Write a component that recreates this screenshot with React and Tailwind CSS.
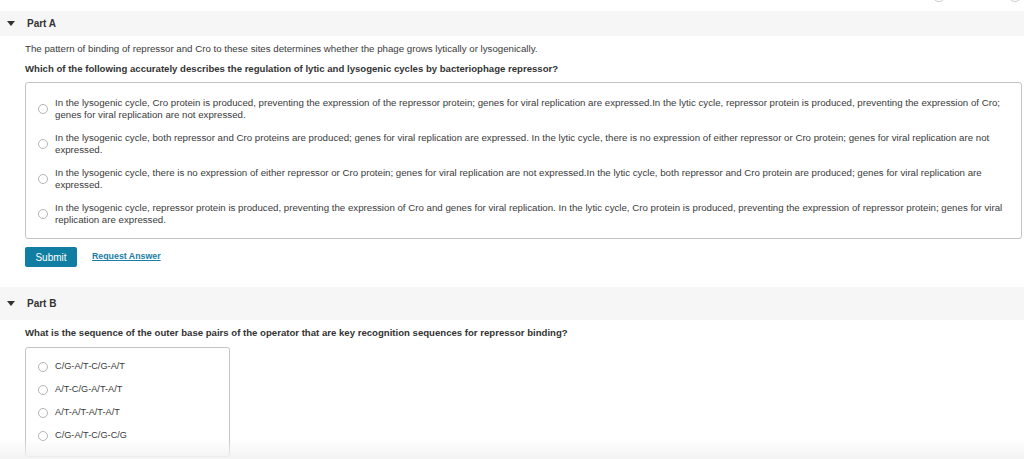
const optionsA = [
  [
    'In the lysogenic cycle, Cro protein is produced, preventing the expression of the repressor protein; genes for viral replication are expressed.In the lytic cycle, repressor protein is produced, preventing the expression of Cro;',
    'genes for viral replication are not expressed.',
  ],
  [
    'In the lysogenic cycle, both repressor and Cro proteins are produced; genes for viral replication are expressed. In the lytic cycle, there is no expression of either repressor or Cro protein; genes for viral replication are not',
    'expressed.',
  ],
  [
    'In the lysogenic cycle, there is no expression of either repressor or Cro protein; genes for viral replication are not expressed.In the lytic cycle, both repressor and Cro protein are produced; genes for viral replication are',
    'expressed.',
  ],
  [
    'In the lysogenic cycle, repressor protein is produced, preventing the expression of Cro and genes for viral replication. In the lytic cycle, Cro protein is produced, preventing the expression of repressor protein; genes for viral',
    'replication are expressed.',
  ],
]

const optionsB = ['C/G-A/T-C/G-A/T', 'A/T-C/G-A/T-A/T', 'A/T-A/T-A/T-A/T', 'C/G-A/T-C/G-C/G']

function Radio() {
  return <span className="w-[10px] h-[10px] rounded-full border border-[#b5b5b5] bg-white flex-shrink-0" />
}

function Caret() {
  return <span className="w-0 h-0 ml-[7px] border-l-[4px] border-r-[4px] border-t-[5px] border-l-transparent border-r-transparent border-t-[#333]" />
}

export default function App() {
  return (
    <div className="relative w-[1024px] h-[459px] overflow-hidden bg-white text-[#3a3a3a] font-['Liberation_Sans',Arial,sans-serif]">
      <div className="flex justify-end gap-[62px] pr-[2px] h-[11px]">
        <span className="w-[14px] h-[14px] -mt-[12px] rounded-full border border-[#ccc]" />
        <span className="w-[14px] h-[14px] -mt-[12px] rounded-full border border-[#ccc]" />
      </div>
      <div className="flex items-center bg-[#f6f6f6] h-[25px]">
        <Caret />
        <span className="ml-[12px] text-[10px] font-bold text-[#333]">Part A</span>
      </div>
      <div className="pl-[25px] pr-[2px]">
        <p className="mt-[8px] text-[9.7px] leading-[10px]">
          The pattern of binding of repressor and Cro to these sites determines whether the phage grows lytically or lysogenically.
        </p>
        <p className="mt-[10px] text-[9.6px] leading-[10px] font-bold text-[#333]">
          Which of the following accurately describes the regulation of lytic and lysogenic cycles by bacteriophage repressor?
        </p>
        <div className="mt-[8px] h-[157px] border border-[#c4c4c4] rounded-[3px] pt-[14px] flex flex-col gap-[12px]">
          {optionsA.map((lines, i) => (
            <div key={i} className="flex items-center">
              <span className="ml-[12px] mr-[7px] flex"><Radio /></span>
              <div className="text-[9.7px] leading-[11.5px]">
                <div>{lines[0]}</div>
                <div>{lines[1]}</div>
              </div>
            </div>
          ))}
        </div>
        <div className="mt-[8px] flex items-center gap-[15px]">
          <button className="w-[52px] h-[20px] rounded-[2px] bg-[#0f7ea2] text-white text-[10px]">Submit</button>
          <a className="text-[8.8px] font-bold underline text-[#1a7ea6]">Request Answer</a>
        </div>
      </div>
      <div className="mt-[20px] flex items-center bg-[#f6f6f6] h-[33px]">
        <Caret />
        <span className="ml-[12px] text-[10px] font-bold text-[#333]">Part B</span>
      </div>
      <div className="pl-[25px]">
        <p className="mt-[8px] text-[9.6px] leading-[10px] font-bold text-[#333]">
          What is the sequence of the outer base pairs of the operator that are key recognition sequences for repressor binding?
        </p>
        <div className="mt-[9px] w-[205px] h-[110px] border border-[#c4c4c4] rounded-[3px] pt-[13px] flex flex-col gap-[12px]">
          {optionsB.map((t) => (
            <div key={t} className="flex items-center">
              <span className="ml-[12px] mr-[7px] flex"><Radio /></span>
              <span className="text-[9.2px] leading-[11px]">{t}</span>
            </div>
          ))}
        </div>
      </div>
      <div className="absolute left-0 right-0 bottom-0 h-[20px] bg-gradient-to-b from-transparent to-[#f3f3f3] pointer-events-none" />
    </div>
  )
}
